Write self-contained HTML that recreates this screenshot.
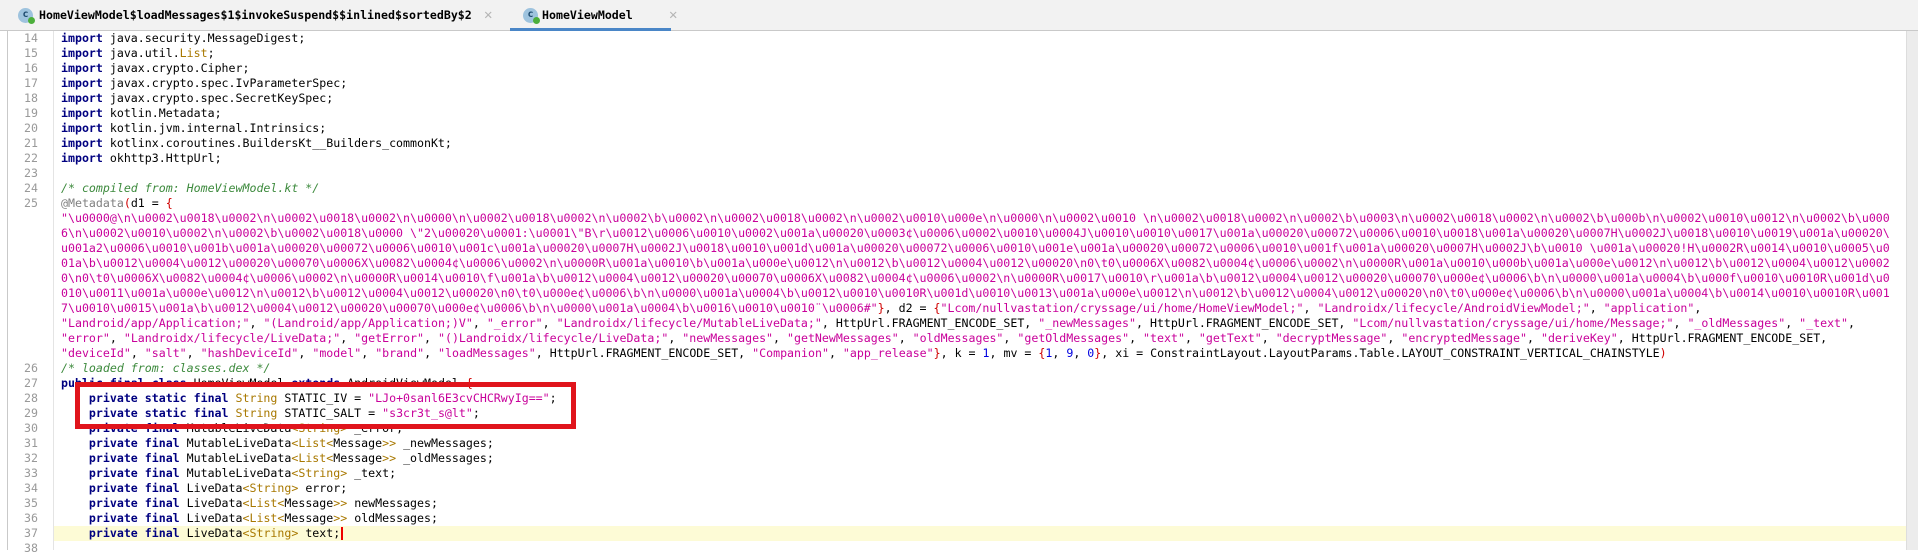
<!DOCTYPE html>
<html><head><meta charset="utf-8"><style>
*{margin:0;padding:0;box-sizing:border-box}
body{width:1918px;height:550px;overflow:hidden;background:#fff;position:relative;font-family:"DejaVu Sans Mono","Liberation Mono",monospace}
.tabs{position:absolute;left:0;top:0;width:1918px;height:31px;background:#f2f2f2;border-bottom:1px solid #c9c9c9}
.tab{position:absolute;top:0;height:31px;font-weight:bold;font-size:11.6px;line-height:31px;color:#000}
.ic{position:absolute;top:8px;width:15px;height:15px;border-radius:50%;background:#9ec3de;color:#1d4a6e;font-size:10px;line-height:14px;text-align:center;font-weight:bold}
.ic:after{content:"";position:absolute;right:-2px;bottom:-1px;width:7px;height:7px;border-radius:50%;background:#4caf3c}
.x{position:absolute;top:0;color:#b5b5b5;font-weight:normal;font-size:14px}
.ul{position:absolute;left:510px;top:28px;width:161px;height:3px;background:#4a86c7}
.ed{position:absolute;left:7px;top:31px;width:1911px;height:519px;border-left:1px solid #c9c9c9}
.gsep{position:absolute;left:53px;top:31px;width:1px;height:519px;background:#e4e4e4}
.sb{position:absolute;left:1906px;top:31px;width:12px;height:519px;background:#ececec;border-left:1px solid #ddd}
.cur{position:absolute;left:54px;top:526px;width:1852px;height:15px;background:#fdfbd6}
.r{position:absolute;left:61px;height:15px;line-height:15px;font-size:11.6px;white-space:pre;color:#000}
.n{position:absolute;left:0;width:38px;text-align:right;height:15px;line-height:15px;font-size:11.6px;color:#999}
.k{color:#000080;font-weight:bold}
.s{color:#c8009a}
.t{color:#a87800}
.c{color:#3d8a3d;font-style:italic}
.a{color:#808080}
.b{color:#d00000}
.u{color:#0000e0}
.box{position:absolute;left:75px;top:382px;width:501px;height:47px;border:5px solid #e0141c}
.caret{position:absolute;left:341px;top:527px;width:2px;height:13px;background:#e00}
</style></head><body>
<div class="tabs">
 <div class="tab" style="left:0;width:505px"><div class="ic" style="left:18px">c</div><span style="position:absolute;left:39px">HomeViewModel$loadMessages$1$invokeSuspend$$inlined$sortedBy$2</span><span class="x" style="left:484px">✕</span></div>
 <div class="tab" style="left:505px;width:170px"><div class="ic" style="left:18px">c</div><span style="position:absolute;left:37px">HomeViewModel</span><span class="x" style="left:164px">✕</span></div>
 <div class="ul"></div>
</div>
<div class="ed"></div>
<div class="gsep"></div>
<div class="cur"></div>
<div class="sb"></div>

<div class="n" style="top:31px">14</div><div class="r" style="top:31px"><span class="k">import</span> java.security.MessageDigest;</div>
<div class="n" style="top:46px">15</div><div class="r" style="top:46px"><span class="k">import</span> java.util.<span class="t">List</span>;</div>
<div class="n" style="top:61px">16</div><div class="r" style="top:61px"><span class="k">import</span> javax.crypto.Cipher;</div>
<div class="n" style="top:76px">17</div><div class="r" style="top:76px"><span class="k">import</span> javax.crypto.spec.IvParameterSpec;</div>
<div class="n" style="top:91px">18</div><div class="r" style="top:91px"><span class="k">import</span> javax.crypto.spec.SecretKeySpec;</div>
<div class="n" style="top:106px">19</div><div class="r" style="top:106px"><span class="k">import</span> kotlin.Metadata;</div>
<div class="n" style="top:121px">20</div><div class="r" style="top:121px"><span class="k">import</span> kotlin.jvm.internal.Intrinsics;</div>
<div class="n" style="top:136px">21</div><div class="r" style="top:136px"><span class="k">import</span> kotlinx.coroutines.BuildersKt__Builders_commonKt;</div>
<div class="n" style="top:151px">22</div><div class="r" style="top:151px"><span class="k">import</span> okhttp3.HttpUrl;</div>
<div class="n" style="top:166px">23</div>
<div class="n" style="top:181px">24</div><div class="r" style="top:181px"><span class="c">/* compiled from: HomeViewModel.kt */</span></div>
<div class="n" style="top:196px">25</div><div class="r" style="top:196px"><span class="a">@Metadata</span><span class="b">(</span>d1 = <span class="b">{</span></div>
<div class="r s" style="top:211px">"\u0000@\n\u0002\u0018\u0002\n\u0002\u0018\u0002\n\u0000\n\u0002\u0018\u0002\n\u0002\b\u0002\n\u0002\u0018\u0002\n\u0002\u0010\u000e\n\u0000\n\u0002\u0010 \n\u0002\u0018\u0002\n\u0002\b\u0003\n\u0002\u0018\u0002\n\u0002\b\u000b\n\u0002\u0010\u0012\n\u0002\b\u000</div>
<div class="r s" style="top:226px">6\n\u0002\u0010\u0002\n\u0002\b\u0002\u0018\u0000 \"2\u00020\u0001:\u0001\"B\r\u0012\u0006\u0010\u0002\u001a\u00020\u0003¢\u0006\u0002\u0010\u0004J\u0010\u0010\u0017\u001a\u00020\u00072\u0006\u0010\u0018\u001a\u00020\u0007H\u0002J\u0018\u0010\u0019\u001a\u00020\</div>
<div class="r s" style="top:241px">u001a2\u0006\u0010\u001b\u001a\u00020\u00072\u0006\u0010\u001c\u001a\u00020\u0007H\u0002J\u0018\u0010\u001d\u001a\u00020\u00072\u0006\u0010\u001e\u001a\u00020\u00072\u0006\u0010\u001f\u001a\u00020\u0007H\u0002J\b\u0010 \u001a\u00020!H\u0002R\u0014\u0010\u0005\u0</div>
<div class="r s" style="top:256px">01a\b\u0012\u0004\u0012\u00020\u00070\u0006X\u0082\u0004¢\u0006\u0002\n\u0000R\u001a\u0010\b\u001a\u000e\u0012\n\u0012\b\u0012\u0004\u0012\u00020\n0\t0\u0006X\u0082\u0004¢\u0006\u0002\n\u0000R\u001a\u0010\u000b\u001a\u000e\u0012\n\u0012\b\u0012\u0004\u0012\u0002</div>
<div class="r s" style="top:271px">0\n0\t0\u0006X\u0082\u0004¢\u0006\u0002\n\u0000R\u0014\u0010\f\u001a\b\u0012\u0004\u0012\u00020\u00070\u0006X\u0082\u0004¢\u0006\u0002\n\u0000R\u0017\u0010\r\u001a\b\u0012\u0004\u0012\u00020\u00070\u000e¢\u0006\b\n\u0000\u001a\u0004\b\u000f\u0010\u0010R\u001d\u0</div>
<div class="r s" style="top:286px">010\u0011\u001a\u000e\u0012\n\u0012\b\u0012\u0004\u0012\u00020\n0\t0\u000e¢\u0006\b\n\u0000\u001a\u0004\b\u0012\u0010\u0010R\u001d\u0010\u0013\u001a\u000e\u0012\n\u0012\b\u0012\u0004\u0012\u00020\n0\t0\u000e¢\u0006\b\n\u0000\u001a\u0004\b\u0014\u0010\u0010R\u001</div>
<div class="r" style="top:301px"><span class="s">7\u0010\u0015\u001a\b\u0012\u0004\u0012\u00020\u00070\u000e¢\u0006\b\n\u0000\u001a\u0004\b\u0016\u0010\u0010¨\u0006#"</span><span class="b">}</span>, d2 = <span class="b">{</span><span class="s">"Lcom/nullvastation/cryssage/ui/home/HomeViewModel;"</span>, <span class="s">"Landroidx/lifecycle/AndroidViewModel;"</span>, <span class="s">"application"</span>,</div>
<div class="r" style="top:316px"><span class="s">"Landroid/app/Application;"</span>, <span class="s">"(Landroid/app/Application;)V"</span>, <span class="s">"_error"</span>, <span class="s">"Landroidx/lifecycle/MutableLiveData;"</span>, HttpUrl.FRAGMENT_ENCODE_SET, <span class="s">"_newMessages"</span>, HttpUrl.FRAGMENT_ENCODE_SET, <span class="s">"Lcom/nullvastation/cryssage/ui/home/Message;"</span>, <span class="s">"_oldMessages"</span>, <span class="s">"_text"</span>,</div>
<div class="r" style="top:331px"><span class="s">"error"</span>, <span class="s">"Landroidx/lifecycle/LiveData;"</span>, <span class="s">"getError"</span>, <span class="s">"()Landroidx/lifecycle/LiveData;"</span>, <span class="s">"newMessages"</span>, <span class="s">"getNewMessages"</span>, <span class="s">"oldMessages"</span>, <span class="s">"getOldMessages"</span>, <span class="s">"text"</span>, <span class="s">"getText"</span>, <span class="s">"decryptMessage"</span>, <span class="s">"encryptedMessage"</span>, <span class="s">"deriveKey"</span>, HttpUrl.FRAGMENT_ENCODE_SET,</div>
<div class="r" style="top:346px"><span class="s">"deviceId"</span>, <span class="s">"salt"</span>, <span class="s">"hashDeviceId"</span>, <span class="s">"model"</span>, <span class="s">"brand"</span>, <span class="s">"loadMessages"</span>, HttpUrl.FRAGMENT_ENCODE_SET, <span class="s">"Companion"</span>, <span class="s">"app_release"</span><span class="b">}</span>, k = <span class="u">1</span>, mv = <span class="b">{</span><span class="u">1</span>, <span class="u">9</span>, <span class="u">0</span><span class="b">}</span>, xi = ConstraintLayout.LayoutParams.Table.LAYOUT_CONSTRAINT_VERTICAL_CHAINSTYLE<span class="b">)</span></div>
<div class="n" style="top:361px">26</div><div class="r" style="top:361px"><span class="c">/* loaded from: classes.dex */</span></div>
<div class="n" style="top:376px">27</div><div class="r" style="top:376px"><span class="k">public final class</span> HomeViewModel <span class="k">extends</span> AndroidViewModel <span class="b">{</span></div>
<div class="n" style="top:391px">28</div><div class="r" style="top:391px">    <span class="k">private static final</span> <span class="t">String</span> STATIC_IV = <span class="s">"LJo+0sanl6E3cvCHCRwyIg=="</span>;</div>
<div class="n" style="top:406px">29</div><div class="r" style="top:406px">    <span class="k">private static final</span> <span class="t">String</span> STATIC_SALT = <span class="s">"s3cr3t_s@lt"</span>;</div>
<div class="n" style="top:421px">30</div><div class="r" style="top:421px">    <span class="k">private final</span> MutableLiveData<span class="t">&lt;String&gt;</span> _error;</div>
<div class="n" style="top:436px">31</div><div class="r" style="top:436px">    <span class="k">private final</span> MutableLiveData<span class="t">&lt;List&lt;</span>Message<span class="t">&gt;&gt;</span> _newMessages;</div>
<div class="n" style="top:451px">32</div><div class="r" style="top:451px">    <span class="k">private final</span> MutableLiveData<span class="t">&lt;List&lt;</span>Message<span class="t">&gt;&gt;</span> _oldMessages;</div>
<div class="n" style="top:466px">33</div><div class="r" style="top:466px">    <span class="k">private final</span> MutableLiveData<span class="t">&lt;String&gt;</span> _text;</div>
<div class="n" style="top:481px">34</div><div class="r" style="top:481px">    <span class="k">private final</span> LiveData<span class="t">&lt;String&gt;</span> error;</div>
<div class="n" style="top:496px">35</div><div class="r" style="top:496px">    <span class="k">private final</span> LiveData<span class="t">&lt;List&lt;</span>Message<span class="t">&gt;&gt;</span> newMessages;</div>
<div class="n" style="top:511px">36</div><div class="r" style="top:511px">    <span class="k">private final</span> LiveData<span class="t">&lt;List&lt;</span>Message<span class="t">&gt;&gt;</span> oldMessages;</div>
<div class="n" style="top:526px">37</div><div class="r" style="top:526px">    <span class="k">private final</span> LiveData<span class="t">&lt;String&gt;</span> text;</div>
<div class="n" style="top:541px">38</div>
<div class="caret"></div>
<div class="box"></div>
</body></html>
